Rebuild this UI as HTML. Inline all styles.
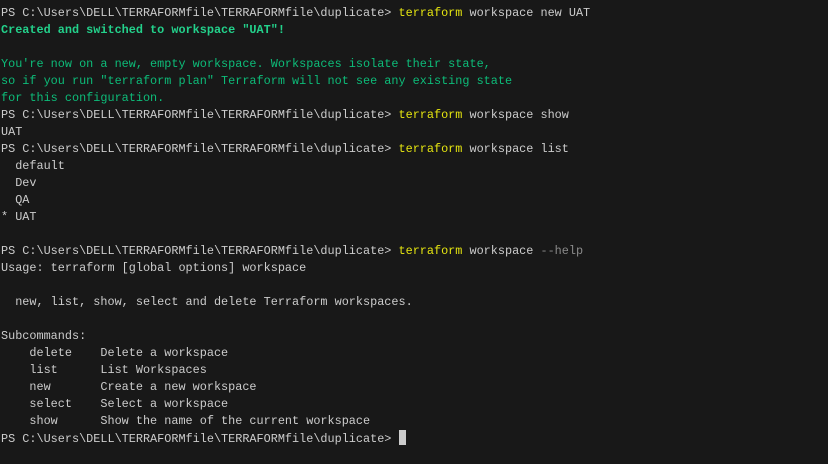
<!DOCTYPE html>
<html><head><style>
html,body{margin:0;padding:0;background:#181818;width:828px;height:464px;overflow:hidden}
pre{margin:0;padding:5px 0 0 1px;font-family:"Liberation Mono",monospace;font-size:11.83px;line-height:17px;color:#cccccc;white-space:pre}
.y{color:#e5e510}.g{color:#23d18b;font-weight:bold}.gg{color:#0dbc79}.d{color:#8a8a8a}
.c{display:inline-block;width:7px;height:15px;background:#cccccc;vertical-align:-3px}
</style></head><body><pre>PS C:\Users\DELL\TERRAFORMfile\TERRAFORMfile\duplicate&gt; <span class="y">terraform</span> workspace new UAT
<span class="g">Created and switched to workspace "UAT"!</span>

<span class="gg">You're now on a new, empty workspace. Workspaces isolate their state,
so if you run "terraform plan" Terraform will not see any existing state
for this configuration.</span>
PS C:\Users\DELL\TERRAFORMfile\TERRAFORMfile\duplicate&gt; <span class="y">terraform</span> workspace show
UAT
PS C:\Users\DELL\TERRAFORMfile\TERRAFORMfile\duplicate&gt; <span class="y">terraform</span> workspace list
  default
  Dev
  QA
* UAT

PS C:\Users\DELL\TERRAFORMfile\TERRAFORMfile\duplicate&gt; <span class="y">terraform</span> workspace <span class="d">--help</span>
Usage: terraform [global options] workspace

  new, list, show, select and delete Terraform workspaces.

Subcommands:
    delete    Delete a workspace
    list      List Workspaces
    new       Create a new workspace
    select    Select a workspace
    show      Show the name of the current workspace
PS C:\Users\DELL\TERRAFORMfile\TERRAFORMfile\duplicate&gt; <span class="c"></span></pre></body></html>
